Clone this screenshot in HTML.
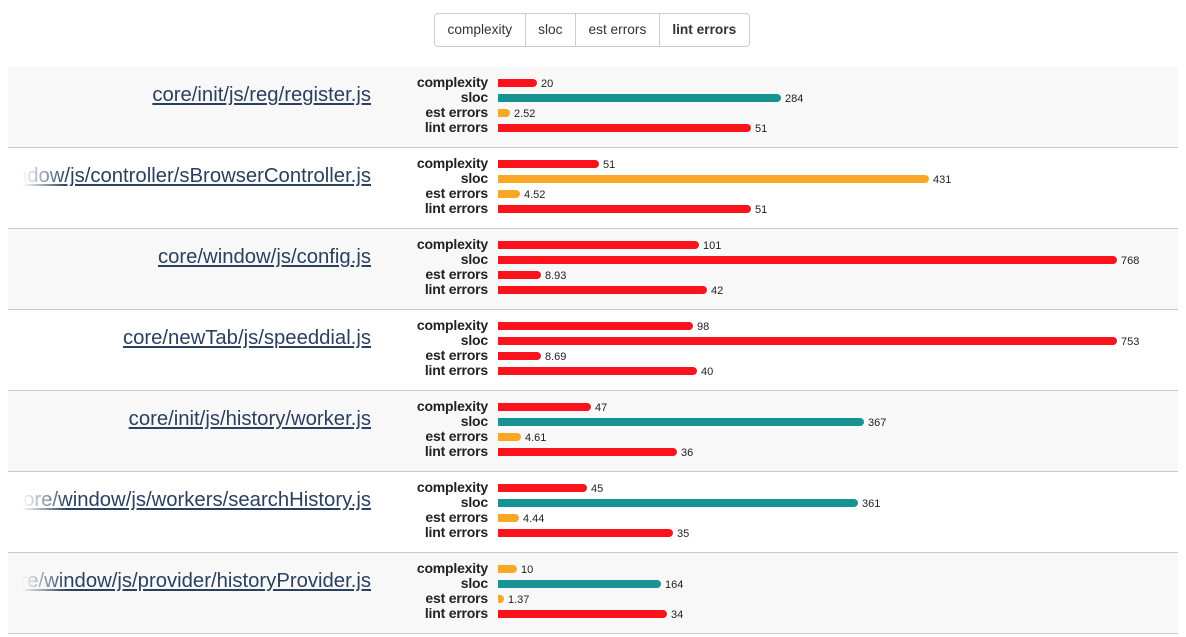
<!DOCTYPE html>
<html><head><style>
body{margin:0;width:1186px;height:637px;background:#fff;font-family:"Liberation Sans",Arial,sans-serif;position:relative;overflow:hidden}
.bg{position:absolute;left:434px;top:13px;height:32px;border:1px solid #ccc;border-radius:4px;display:flex;font-size:13.7px;color:#333}
.bg div{padding:0 12.5px;line-height:32px;border-left:1px solid #ccc}
.bg div:first-child{border-left:none}
.row{position:absolute;left:8px;width:1170px;height:80px;border-bottom:1px solid #ccc}
.g{background:#f8f8f8}
.name{position:absolute;left:14px;width:349px;top:15px;height:26px;overflow:hidden;display:flex;justify-content:flex-end;white-space:nowrap}
.name a{font-size:20.3px;color:#2b3f5e;text-decoration:underline;line-height:26px}
.fade{position:absolute;left:14px;top:15px;width:45px;height:26px}
.g .fade{background:linear-gradient(to right,rgba(248,248,248,1),rgba(248,248,248,0))}
.w .fade{background:linear-gradient(to right,#fff,rgba(255,255,255,0))}
.lbl{position:absolute;right:690px;font-size:14px;font-weight:bold;color:#222;line-height:15px;text-align:right;letter-spacing:-0.2px}
.bar{position:absolute;left:490px;height:8px;border-radius:0 4px 4px 0}
.num{position:absolute;font-size:11px;color:#222;line-height:10px}
.r{background:#fa121c}.t{background:#189393}.o{background:#f9a825}
</style></head><body>
<div class="bg"><div>complexity</div><div>sloc</div><div>est errors</div><div style="font-weight:bold">lint errors</div></div>
<script>
const rows=[
["core/init/js/reg/register.js",[[537,20,'r'],[781,284,'t'],[510,'2.52','o'],[751,51,'r']]],
["core/window/js/controller/sBrowserController.js",[[599,51,'r'],[929,431,'o'],[520,'4.52','o'],[751,51,'r']]],
["core/window/js/config.js",[[699,101,'r'],[1117,768,'r'],[541,'8.93','r'],[707,42,'r']]],
["core/newTab/js/speeddial.js",[[693,98,'r'],[1117,753,'r'],[541,'8.69','r'],[697,40,'r']]],
["core/init/js/history/worker.js",[[591,47,'r'],[864,367,'t'],[521,'4.61','o'],[677,36,'r']]],
["core/window/js/workers/searchHistory.js",[[587,45,'r'],[858,361,'t'],[519,'4.44','o'],[673,35,'r']]],
["core/window/js/provider/historyProvider.js",[[517,10,'o'],[661,164,'t'],[504,'1.37','o'],[667,34,'r']]]];
const labels=['complexity','sloc','est errors','lint errors'];
let h='';
rows.forEach((r,i)=>{
 h+=`<div class="row ${i%2==0?'g':'w'}" style="top:${67+i*81}px"><div class="name"><a>${r[0]}</a></div><div class="fade"></div>`;
 r[1].forEach((b,j)=>{
  const cy=16+j*15;
  h+=`<div class="lbl" style="top:${cy-8}px">${labels[j]}</div>`;
  h+=`<div class="bar ${b[2]}" style="top:${cy-4}px;width:${b[0]-498}px"></div>`;
  h+=`<div class="num" style="top:${cy-4}px;left:${b[0]-8+4}px">${b[1]}</div>`;
 });
 h+='</div>';
});
document.write(h);
</script>
</body></html>
